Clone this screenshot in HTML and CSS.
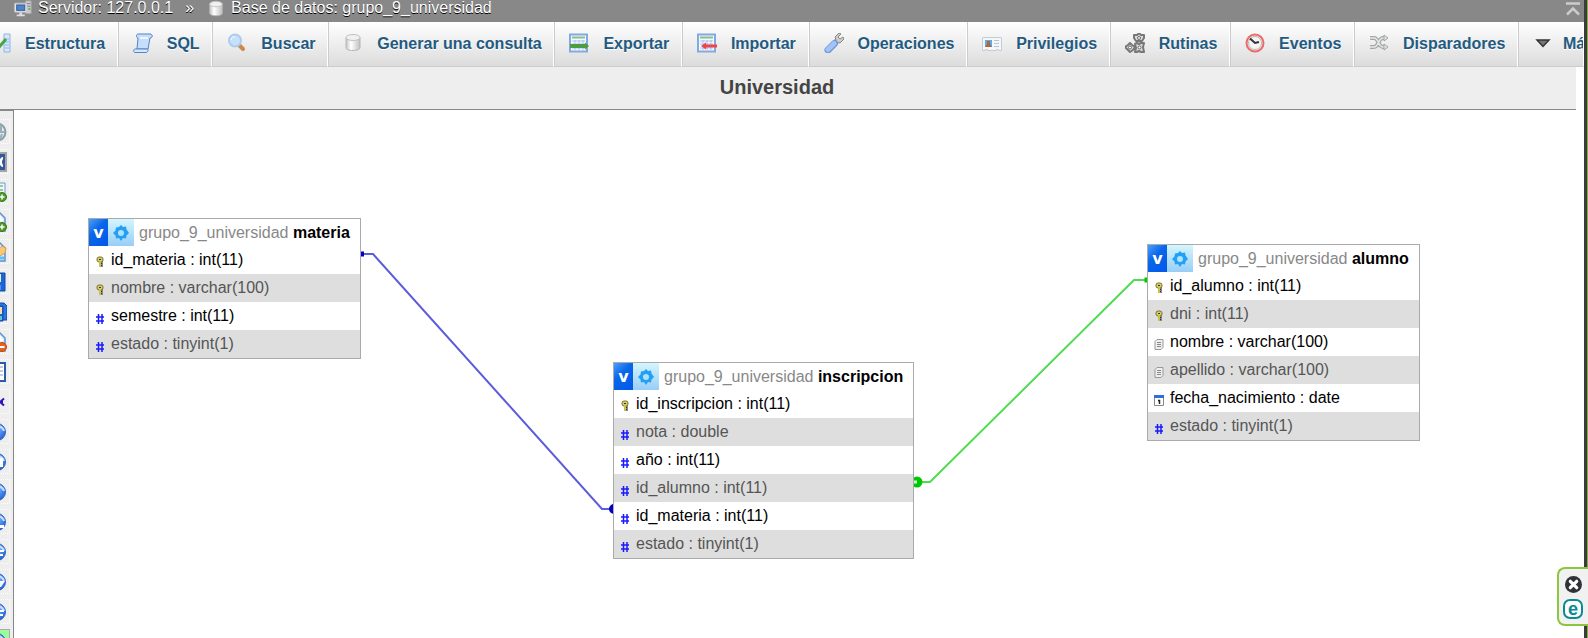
FILE: index.html
```html
<!DOCTYPE html>
<html lang="es">
<head>
<meta charset="utf-8">
<title>Universidad - Diseñador</title>
<link rel="stylesheet" href="styles.css">
</head>
<body>
<svg class="defs" aria-hidden="true">
  <defs>
    <linearGradient id="gc" x1="0" y1="0" x2="1" y2="0"><stop offset="0" stop-color="#c4c4c4"/><stop offset=".35" stop-color="#fff"/><stop offset="1" stop-color="#c0c0c0"/></linearGradient>
    <radialGradient id="gb" cx=".4" cy=".3" r=".8"><stop offset="0" stop-color="#b5d3ff"/><stop offset=".5" stop-color="#4a8df0"/><stop offset="1" stop-color="#2157c5"/></radialGradient>
  </defs>
  <symbol id="server" viewBox="0 0 20 20"><path d="M13 1h6v14h-6z" fill="#ccc" stroke="#aaa"/><path d="M14 4h4M14 7h4" stroke="#777"/><path d="M16 9h2v2h-2z" fill="#5a5"/><rect x=".5" y="3.500" width="14" height="10" rx="1" fill="#e4e4e4" stroke="#bbb"/><rect x="3" y="5.500" width="9" height="6" fill="#4f83c9" stroke="#28589c"/><path d="M6 14h3v2h3v2H3v-2h3z" fill="#ddd"/></symbol>
  <symbol id="db" viewBox="0 0 20 20"><path d="M3 4.500v10c0 2 3 3 7 3s7-1 7-3v-10z" fill="url(#gc)" stroke="#b4b4b4"/><ellipse cx="10" cy="4.500" rx="7" ry="3" fill="#f0f0f0" stroke="#c0c0c0"/></symbol>
  <symbol id="struct" viewBox="0 0 20 20"><path d="M1 2h7v16H1z" fill="#cfe2fa" stroke="#82a9dc"/><path d="M13 1h6v18h-6z" fill="#d8e8fb" stroke="#8fb3e2"/><path d="M14 6h4M14 9h4M14 12h4M14 15h4" stroke="#90b5e5"/><path d="M5 9l4 4 6-7" fill="none" stroke="#47a447" stroke-width="3"/></symbol>
  <symbol id="sql" viewBox="0 0 20 20"><path d="M5 1h12c3 0 3 4 0 4l-2 11H4L5 5C3 5 3 1 5 1z" fill="#c4defb" stroke="#5583c4"/><path d="M7 5h8" stroke="#edf6ff" stroke-width="2"/><path d="M2 16h12c2 0 1 3.500-1 3.500H2c-2 0-1.500-3.500 0-3.500z" fill="#d6e8fc" stroke="#5583c4"/></symbol>
  <symbol id="search" viewBox="0 0 20 20"><path d="M12 12l4 4" stroke="#c98b4d" stroke-width="4" stroke-linecap="round"/><circle cx="8" cy="7.500" r="6" fill="#c5e1fc" stroke="#afcbea" stroke-width="2"/><path d="M4 7c0-2 2-4 4-3" stroke="#fff" fill="none"/></symbol>
  <symbol id="sheet" viewBox="0 0 20 20"><rect x="1" y="1.500" width="17" height="17" fill="#f4f9ff" stroke="#82a9e0" stroke-width="2"/><path d="M3 4.500h13" stroke="#89bf89" stroke-width="2"/><path d="M3 8h13M3 11h13M3 15h13M6 7v10M10 7v10M14 7v10" stroke="#a9c5ec"/></symbol>
  <symbol id="export" viewBox="0 0 20 20"><use href="#sheet"/><path d="M1 11h15V9.500l4 3.500-4 3.500V15H1z" fill="#4c9d42"/></symbol>
  <symbol id="import" viewBox="0 0 20 20"><use href="#sheet"/><path d="M20 11.500H9V9.500L4 13l5 3.500v-2h11z" fill="#ef4549"/></symbol>
  <symbol id="wrench" viewBox="0 0 20 20"><path d="M10 10l4-4" stroke="#aaa" stroke-width="4"/><path d="M12 7l-1-3 4-4 2 1-3 3 2 2 3-2 1 2-4 4-4-1z" fill="#ccc" stroke="#888"/><path d="M10.500 10.500L4 17" stroke="#6f97dc" stroke-width="7" stroke-linecap="round"/><path d="M10 10.500L4 16.500" stroke="#a3c2f6" stroke-width="5" stroke-linecap="round"/></symbol>
  <symbol id="card" viewBox="0 0 20 20"><path d="M.5 4.500h19v13h-3v-1h-2v1h-9v-1h-2v1h-3z" fill="#f4f6f8" stroke="#c5ccd4"/><rect x="3" y="7" width="7" height="7" fill="#5eaaf0"/><path d="M5 8h3v3l2 3H3l2-3z" fill="#a86b41"/><path d="M12 7.500h5M12 10.500h5M12 13.500h5" stroke="#b2c5dc"/></symbol>
  <symbol id="cogs" viewBox="0 0 20 20"><g fill="#ddd" stroke="#777" stroke-width="2" stroke-linejoin="round"><path d="M14 0l2 2h3v3l-2 3h-6L9 5V2h3zM5 10l2 2 3 2-2 3-3 2-2-2-3-3 3-2zM12 10l2 1 2-1h3l-1 4 1 5h-3l-2-1-2 1h-2l1-4-1-4z"/></g><g fill="#fff" stroke="#666"><circle cx="14" cy="5" r="1.500"/><circle cx="5" cy="14.500" r="1.500"/><circle cx="14.500" cy="14.500" r="1.500"/></g></symbol>
  <symbol id="clock" viewBox="0 0 20 20"><circle cx="10" cy="10" r="8.500" fill="#e9e9e9" stroke="#ed6a6a" stroke-width="2"/><circle cx="10" cy="10" r="6.500" fill="#f4f4f4" stroke="#bbb"/><path d="M5 5.500l5 4.500 4-1" fill="none" stroke="#333" stroke-width="2"/></symbol>
  <symbol id="shuffle" viewBox="0 0 20 20"><g fill="none" stroke="#a4a8a4" stroke-width="4"><path d="M1 5h4c5 0 4 9 9 9h2M1 14h4c5 0 4-9 9-9h2"/></g><g fill="none" stroke="#e6e9e6" stroke-width="1.500"><path d="M1 5h4c5 0 4 9 9 9h2M1 14h4c5 0 4-9 9-9h2"/></g><path d="M15 2l4 3-4 3zM15 11l4 3-4 3z" fill="#e6e6e6" stroke="#a4a4a4"/></symbol>
  <symbol id="caret" viewBox="0 0 20 20"><path d="M4 7h12l-6 6.500z" fill="#777" stroke="#333" stroke-width="1.500"/></symbol>
  <symbol id="gear" viewBox="0 0 16 16"><path d="M8 0l2 2 3-.5.5 3L16 8l-2.500 2.500-.5 3-3-.5-2 3-2-3-3 .5-.5-3L0 8l2.500-2.500.5-3L6 2z" fill="#22a0f5"/><circle cx="8" cy="8" r="3" fill="#b0e2fb"/></symbol>
  <symbol id="key" viewBox="0 0 10 12"><path d="M4 3h4v8H6l-2-2z" fill="#888"/><rect x="2" y="1" width="6" height="5" rx="2" fill="#d8d05a" stroke="#77753a"/><path d="M5 5v6" stroke="#c8c050" stroke-width="2"/><path d="M4 3h2v1H4zM6 7h1v1H6zM6 9h1v1H6z" fill="#333"/></symbol>
  <symbol id="num" viewBox="0 0 10 12"><path d="M3.500 2v10M7 2v10M1 5h8M1 9h8" stroke="#1a1aff" stroke-width="1.500"/></symbol>
  <symbol id="text" viewBox="0 0 10 12"><path d="M3 1.500h6v8l-2 2H1v-8z" fill="#eee" stroke="#999"/><path d="M3 4.500h4M3 6.500h4M3 8.500h4" stroke="#888"/></symbol>
  <symbol id="date" viewBox="0 0 10 12"><path d="M.5 1.500h9v10h-9z" fill="#fff" stroke="#888"/><path d="M0 1h10v3H0z" fill="#2f6fdd"/><path d="M4 6.500h1.500V10" fill="none" stroke="#222" stroke-width="1.500"/></symbol>
  <symbol id="globe" viewBox="0 0 20 20"><circle cx="10" cy="10" r="8.500" fill="#dfe9ee" stroke="#8b9da5" stroke-width="2"/><path d="M10 10h8M14 3v6M15 12l-2 5" stroke="#9aaeb8" stroke-width="2"/></symbol>
  <symbol id="full" viewBox="0 0 20 20"><rect x="1" y="1" width="18" height="18" fill="#34599b" stroke="#a4a4a4" stroke-width="2"/><path d="M10 7h3l2-2h1v2l-1 2v2l1 2v2h-1l-2-2h-3z" fill="#fff"/></symbol>
  <symbol id="page" viewBox="0 0 20 20"><path d="M2 1h11l5 5v13H2z" fill="#dcecff" stroke="#5d8fd1" stroke-width="1.500"/><path d="M11 3l4 6" stroke="#fff" stroke-width="3"/></symbol>
  <symbol id="plus" viewBox="0 0 20 20"><circle cx="15" cy="15" r="4.500" fill="#4f9a24" stroke="#37791a"/><path d="M15 12.500v5M12.500 15h5" stroke="#fff" stroke-width="1.500"/></symbol>
  <symbol id="addtable" viewBox="0 0 20 20"><path d="M1 1h17v15H1z" fill="#eef6ff" stroke="#6c9ad8"/><path d="M3 4h13M3 8h13" stroke="#9bc992" stroke-width="2"/><use href="#plus"/></symbol>
  <symbol id="newpage" viewBox="0 0 20 20"><use href="#page"/><use href="#plus"/></symbol>
  <symbol id="edit" viewBox="0 0 20 20"><use href="#page"/><path d="M9 9l6-5 4 2-1 5-5 3z" fill="#f5c97a" stroke="#d89c42"/><path d="M12 16h5" stroke="#5ebcf7" stroke-width="3"/></symbol>
  <symbol id="save" viewBox="0 0 20 20"><path d="M1 1h17v18H1z" fill="#1767da" stroke="#124ca6"/><path d="M4 2h10v8H4z" fill="#f7ebcf"/><path d="M8 13h6v5H8z" fill="#4c94ee"/></symbol>
  <symbol id="saveas" viewBox="0 0 20 20"><path d="M8 1h9l3 3v14h-9z" fill="#2d77df" stroke="#124ca6"/><path d="M1 4h15v15H1z" fill="#1767da" stroke="#124ca6"/><path d="M5 5h10v7H5z" fill="#f9dca6"/><path d="M11 14h4v4h-4z" fill="#60c0ce"/></symbol>
  <symbol id="delpage" viewBox="0 0 20 20"><use href="#page"/><circle cx="15" cy="15" r="4.500" fill="#e8621c" stroke="#bb460d"/><path d="M12.500 15h5" stroke="#fff" stroke-width="2"/></symbol>
  <symbol id="newtable" viewBox="0 0 20 20"><path d="M1 1h17v18H1z" fill="#fff" stroke="#2b5ba9" stroke-width="2"/><path d="M3 5h13M3 9h13M3 13h13M12 4v14" stroke="#8398b6"/></symbol>
  <symbol id="relation" viewBox="0 0 20 20"><path d="M8 10h8M17 6.500L13 10l4 3.500" stroke="#2a14c4" stroke-width="2" fill="none"/></symbol>
  <symbol id="ball" viewBox="0 0 20 20"><circle cx="10" cy="10" r="8.500" fill="url(#gb)" stroke="#3568c8"/><path d="M9 4c4 0 7 2 8 5" fill="none" stroke="#c8deff" stroke-width="2"/></symbol>
  <symbol id="ball2" viewBox="0 0 20 20"><use href="#ball"/><path d="M12 6h4v9h-4z" fill="#fff"/></symbol>
  <symbol id="ball3" viewBox="0 0 20 20"><use href="#ball"/><path d="M11 13h6v3h-6z" fill="#fff"/></symbol>
  <symbol id="ball4" viewBox="0 0 20 20"><use href="#ball"/><path d="M10 9h7M10 13h6" stroke="#fff" stroke-width="2"/></symbol>
  <symbol id="ball5" viewBox="0 0 20 20"><use href="#ball"/><path d="M10 9h8l-4 6h-3z" fill="#fff"/></symbol>
</svg>

<div class="app">
  <header class="crumbs">
    <svg class="icon"><use href="#server"/></svg>
    <a href="#">Servidor: 127.0.0.1</a>
    <span class="sep">»</span>
    <svg class="icon"><use href="#db"/></svg>
    <a href="#">Base de datos: grupo_9_universidad</a>
    <button class="totop" aria-label="Subir"><svg viewBox="0 0 16 14"><path d="M1 1.500h14M2 12.500l6-6 6 6" fill="none" stroke="#ccc" stroke-width="2.500"/></svg></button>
  </header>

  <nav class="tabs">
    <a class="tab" href="#"><svg class="icon"><use href="#struct"/></svg>Estructura</a>
    <a class="tab" href="#"><svg class="icon"><use href="#sql"/></svg>SQL</a>
    <a class="tab" href="#"><svg class="icon"><use href="#search"/></svg>Buscar</a>
    <a class="tab" href="#"><svg class="icon"><use href="#db"/></svg>Generar una consulta</a>
    <a class="tab" href="#"><svg class="icon"><use href="#export"/></svg>Exportar</a>
    <a class="tab" href="#"><svg class="icon"><use href="#import"/></svg>Importar</a>
    <a class="tab" href="#"><svg class="icon"><use href="#wrench"/></svg>Operaciones</a>
    <a class="tab" href="#"><svg class="icon"><use href="#card"/></svg>Privilegios</a>
    <a class="tab" href="#"><svg class="icon"><use href="#cogs"/></svg>Rutinas</a>
    <a class="tab" href="#"><svg class="icon"><use href="#clock"/></svg>Eventos</a>
    <a class="tab" href="#"><svg class="icon"><use href="#shuffle"/></svg>Disparadores</a>
    <a class="tab more" href="#"><svg class="icon"><use href="#caret"/></svg>Má</a>
  </nav>

  <h1 class="title">Universidad</h1>

  <main class="designer">
    <aside class="tools">
      <button aria-label="Mostrar lista de tablas"><svg class="icon"><use href="#globe"/></svg></button>
      <button aria-label="Pantalla completa"><svg class="icon"><use href="#full"/></svg></button>
      <button aria-label="Agregar tablas"><svg class="icon"><use href="#addtable"/></svg></button>
      <button aria-label="Nueva página"><svg class="icon"><use href="#newpage"/></svg></button>
      <button aria-label="Abrir página"><svg class="icon"><use href="#edit"/></svg></button>
      <button aria-label="Guardar página"><svg class="icon"><use href="#save"/></svg></button>
      <button aria-label="Guardar como"><svg class="icon"><use href="#saveas"/></svg></button>
      <button aria-label="Borrar páginas"><svg class="icon"><use href="#delpage"/></svg></button>
      <button aria-label="Crear tabla"><svg class="icon"><use href="#newtable"/></svg></button>
      <button aria-label="Crear relación"><svg class="icon"><use href="#relation"/></svg></button>
      <button aria-label="Columna a mostrar"><svg class="icon"><use href="#ball"/></svg></button>
      <button aria-label="Recargar"><svg class="icon"><use href="#ball2"/></svg></button>
      <button aria-label="Ayuda"><svg class="icon"><use href="#ball"/></svg></button>
      <button aria-label="Enlaces angulares"><svg class="icon"><use href="#ball3"/></svg></button>
      <button aria-label="Ajustar a la cuadrícula"><svg class="icon"><use href="#ball4"/></svg></button>
      <button aria-label="Pequeño/grande"><svg class="icon"><use href="#ball5"/></svg></button>
      <button aria-label="Alternar líneas"><svg class="icon"><use href="#ball4"/></svg></button>
      <button class="on" aria-label="Exportar esquema"><svg class="icon"><use href="#ball"/></svg></button>
    </aside>

    <section class="canvas">
      <svg class="links" viewBox="14 110 1562 528" width="1562" height="528">
        <g fill="none" stroke-width="2">
          <path d="M361 254H373L602 509H612" stroke="#5c5cdc"/>
          <path d="M920 482H930L1134 280H1147" stroke="#4fdc4f"/>
        </g>
        <path d="M360 251.500h4v5h-4zM614 504a5 5 0 0 0 0 10z" fill="#0000c8"/>
        <path d="M1144.500 277.500h4v5h-4z" fill="#00c800"/>
        <circle cx="917" cy="482" r="5.500" fill="#00c800"/><path d="M914 480.500h3v3h-3z" fill="#d8f5d8"/>
      </svg>

      <table class="entity materia">
        <thead><tr><th><div class="head"><button class="fold">v</button><button class="cog" aria-label="Opciones"><svg><use href="#gear"/></svg></button><span class="name"><span class="schema">grupo_9_universidad</span> materia</span></div></th></tr></thead>
        <tbody>
          <tr><td><svg><use href="#key"/></svg>id_materia : int(11)</td></tr>
          <tr><td><svg><use href="#key"/></svg>nombre : varchar(100)</td></tr>
          <tr><td><svg><use href="#num"/></svg>semestre : int(11)</td></tr>
          <tr><td><svg><use href="#num"/></svg>estado : tinyint(1)</td></tr>
        </tbody>
      </table>

      <table class="entity inscripcion">
        <thead><tr><th><div class="head"><button class="fold">v</button><button class="cog" aria-label="Opciones"><svg><use href="#gear"/></svg></button><span class="name"><span class="schema">grupo_9_universidad</span> inscripcion</span></div></th></tr></thead>
        <tbody>
          <tr><td><svg><use href="#key"/></svg>id_inscripcion : int(11)</td></tr>
          <tr><td><svg><use href="#num"/></svg>nota : double</td></tr>
          <tr><td><svg><use href="#num"/></svg>año : int(11)</td></tr>
          <tr><td><svg><use href="#num"/></svg>id_alumno : int(11)</td></tr>
          <tr><td><svg><use href="#num"/></svg>id_materia : int(11)</td></tr>
          <tr><td><svg><use href="#num"/></svg>estado : tinyint(1)</td></tr>
        </tbody>
      </table>

      <table class="entity alumno">
        <thead><tr><th><div class="head"><button class="fold">v</button><button class="cog" aria-label="Opciones"><svg><use href="#gear"/></svg></button><span class="name"><span class="schema">grupo_9_universidad</span> alumno</span></div></th></tr></thead>
        <tbody>
          <tr><td><svg><use href="#key"/></svg>id_alumno : int(11)</td></tr>
          <tr><td><svg><use href="#key"/></svg>dni : int(11)</td></tr>
          <tr><td><svg><use href="#text"/></svg>nombre : varchar(100)</td></tr>
          <tr><td><svg><use href="#text"/></svg>apellido : varchar(100)</td></tr>
          <tr><td><svg><use href="#date"/></svg>fecha_nacimiento : date</td></tr>
          <tr><td><svg><use href="#num"/></svg>estado : tinyint(1)</td></tr>
        </tbody>
      </table>
    </section>
  </main>
</div>
<div class="edge"></div>

<div class="widget">
  <button aria-label="Cerrar"><svg viewBox="0 0 16 16"><circle cx="8" cy="8" r="8" fill="#2f3338"/><path d="M5 5l6 6M11 5l-6 6" stroke="#fff" stroke-width="3" stroke-linecap="round"/></svg></button>
  <button class="brand">e</button>
</div>
</body>
</html>
```
FILE: styles.css
```css
* { box-sizing: border-box; }

body {
  margin: 0;
  height: 100vh;
  display: flex;
  overflow: hidden;
  background: #fff;
  font: 16px/20px "Liberation Sans", Arial, sans-serif;
}

button {
  margin: 0;
  padding: 0;
  border: 0;
  background: none;
  font: inherit;
  display: flex;
  align-items: center;
  justify-content: center;
}

a { color: inherit; text-decoration: none; }

.defs { position: absolute; width: 0; height: 0; }
.icon { width: 20px; height: 20px; flex: none; }

.app {
  flex: 1;
  min-width: 0;
  display: flex;
  flex-direction: column;
  overflow: hidden;
}

.edge {
  flex: none;
  width: 4px;
  background: #3b3b3f;
  border-right: 1px solid #7db53a;
}

.crumbs {
  height: 22px;
  flex: none;
  display: flex;
  align-items: flex-start;
  padding: 0 3px 0 13px;
  background: #888;
  color: #fff;
  line-height: 16px;
  text-shadow: 0 1px 0 #000;
}
.crumbs .icon { margin-right: 5px; height: 18px; }
.sep { margin: 0 12px; }
.totop { margin: 2px 0 0 auto; }
.totop svg { width: 16px; height: 14px; }

.tabs { display: flex; flex: none; margin-left: -24px; }
.tab {
  flex: 1 0 auto;
  height: 45px;
  display: flex;
  align-items: center;
  gap: 14px;
  padding: 0 11px 0 14px;
  border-left: 1px solid #ccc;
  border-right: 1px solid #fff;
  border-bottom: 1px solid #ccc;
  background: linear-gradient(#fff, #dcdcdc);
  color: #235a81;
  font-weight: bold;
  line-height: 18px;
  text-shadow: 0 1px 0 #fff;
  white-space: nowrap;
}
.tab .icon { margin-bottom: 2px; }
.tab.more { flex: 0 0 66px; overflow: hidden; }
.more .icon { margin-right: -4px; }

.title {
  flex: none;
  margin: 0 8px 0 -22px;
  padding: 8px 0 10px 0;
  background: #eee;
  border-bottom: 1px solid #888;
  color: #444;
  font-size: 20px;
  line-height: 24px;
  text-align: center;
}

.designer { flex: 1; min-height: 0; display: flex; overflow: hidden; }

.tools {
  flex: none;
  width: 14px;
  display: flex;
  flex-direction: column;
  gap: 5px;
  padding-top: 8px;
  overflow: hidden;
  background: #eee;
  border-top: 1px solid #888;
  border-right: 1px solid #888;
}
.tools button {
  flex: none;
  width: 26px;
  height: 25px;
  margin-left: -16px;
  border: 1px dotted #fff;
}
.tools .on { background: #9f9; border: 1px solid #aaa; }

.canvas { position: relative; flex: 1; overflow: hidden; }
.links { position: absolute; left: 0; top: 0; }

.entity {
  position: absolute;
  border: 1px solid #aaa;
  border-collapse: separate;
  border-spacing: 0;
  background: #fff;
}
.materia { left: 74px; top: 108px; }
.inscripcion { left: 599px; top: 252px; }
.alumno { left: 1133px; top: 134px; }

.entity th, .entity td { padding: 0; text-align: left; white-space: nowrap; }
.entity td { height: 28px; padding-left: 6px; color: #000; }
.entity td svg { width: 10px; height: 12px; margin-right: 6px; vertical-align: -3px; }
.entity tbody tr:nth-child(even) td { background: #dedede; color: #555; }

.head { display: flex; height: 27px; align-items: center; }
.fold {
  width: 19px;
  height: 27px;
  background: linear-gradient(135deg, #4aa0fa, #0a66ea 40%, #0058e8);
  color: #fff;
  font: bold 16px/20px "DejaVu Sans", sans-serif;
}
.cog { width: 26px; height: 27px; background: linear-gradient(#d4f6fd, #98cdf7); }
.cog svg { width: 16px; height: 16px; }
.name { padding: 0 10px 0 5px; color: #000; }
.schema { color: #888; font-weight: normal; }

.widget {
  position: absolute;
  right: 0;
  bottom: 12px;
  width: 31px;
  display: flex;
  flex-direction: column;
  align-items: center;
  gap: 6px;
  padding: 7px 3px 5px 2px;
  background: #f1f1f1;
  border: 2px solid #8cc63f;
  border-right: 0;
  border-radius: 8px 0 0 8px;
}
.widget svg { width: 17px; height: 17px; }
.brand {
  width: 20px;
  height: 20px;
  border: 2px solid #0c8a94;
  border-radius: 7px;
  background: #fff;
  color: #0c8a94;
  font: bold 18px/12px "Liberation Sans", Arial, sans-serif;
}
```
